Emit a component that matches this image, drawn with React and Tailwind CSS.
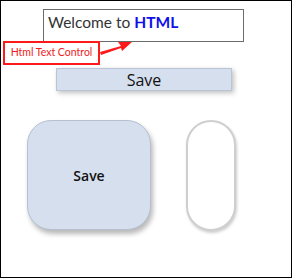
export default function App() {
  return (
    <div
      className="relative w-[292px] h-[278px] border border-black bg-white overflow-hidden"
      style={{ fontFamily: '"Open Sans", "Noto Sans", sans-serif' }}
    >
      {/* text control */}
      <div
        className="mt-[8px] ml-[42px] w-[201px] h-[33px] border border-[#6b6b6b] pl-[4px] pt-[1px] text-[15.5px] leading-[22px] text-[#333]"
        style={{ fontFamily: 'Lato, "Open Sans", sans-serif' }}
      >
        Welcome to <span className="font-bold text-[#1010e8]">HTML</span>
      </div>

      {/* callout */}
      <div
        className="absolute left-[2px] top-[40px] w-[97px] h-[24px] border-2 border-[#ff1a1a] bg-white flex items-center justify-center text-[10.5px] text-[#ee1c1c]"
        style={{ fontFamily: 'Lato, "Open Sans", sans-serif' }}
      >
        Html Text Control
      </div>
      <svg className="absolute left-[98px] top-[36px]" width="36" height="22" viewBox="0 0 36 22">
        <path d="M1 15 L22 9 L19 5 L33 5 L23 14 L22 11 L2 18 Z" fill="#ff1a1a" />
      </svg>

      {/* rectangular save */}
      <div className="mt-[26px] ml-[55px] w-[176px] h-[23px] bg-[#d6dfee] border border-[#b9c4d6] shadow-[2px_2px_5px_rgba(0,0,0,0.25)] flex items-center justify-center text-[16px] font-medium text-[#111]">
        Save
      </div>

      <div className="mt-[29px] ml-[26px] flex gap-[35px]">
        <div className="w-[124px] h-[110px] rounded-[24px] bg-[#d5dfee] border border-[#b5c0d2] shadow-[2px_4px_5px_rgba(0,0,0,0.28)] flex items-center justify-center text-[14px] font-semibold text-[#111]">
          Save
        </div>
        <div className="w-[50px] h-[111px] rounded-full bg-white border-2 border-[#cfcfcf] shadow-[1px_2px_3px_rgba(0,0,0,0.2)]" />
      </div>
    </div>
  )
}
